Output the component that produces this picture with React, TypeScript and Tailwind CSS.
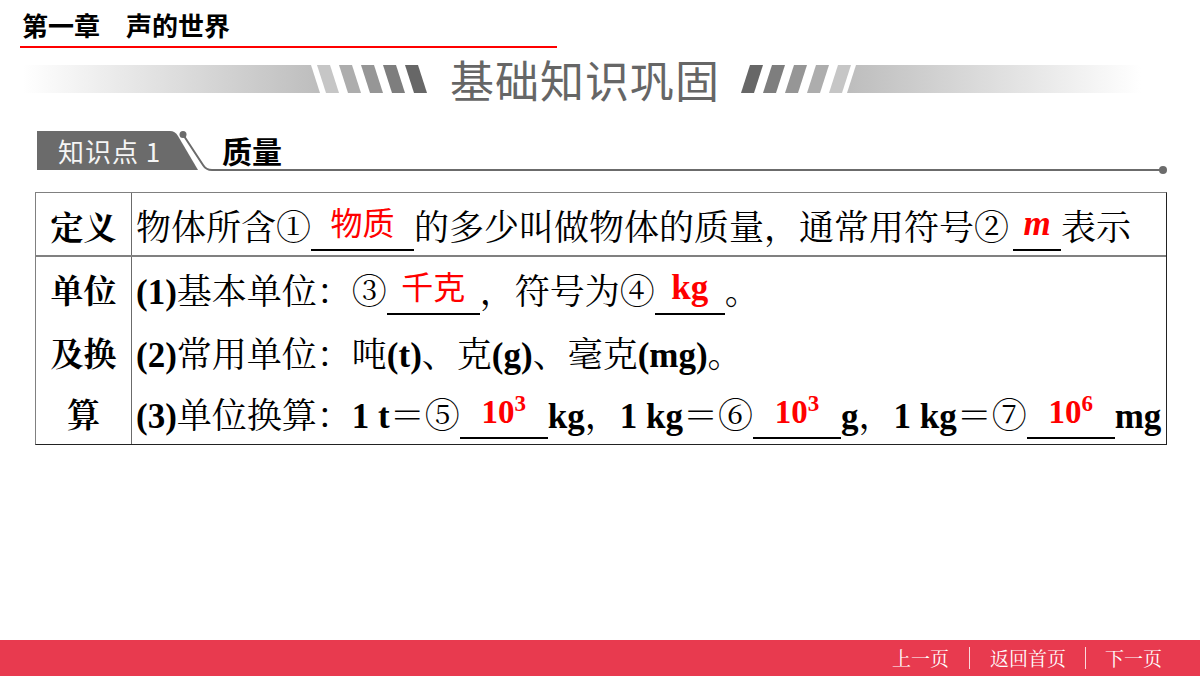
import type { ReactNode } from "react";

const serif = { fontFamily: '"Liberation Serif","Noto Serif CJK SC","Noto Sans CJK SC",serif' };

const leftStripes = ["#c6c6c6", "#adadad", "#969696", "#7e7e7e", "#676767"];

const Blank = ({ className, children }: { className: string; children?: ReactNode }) => (
  <span className={`inline-block border-b-2 border-black text-center leading-[1] pb-[3px] ${className}`}>
    <span className="relative -top-[5px]">{children}</span>
  </span>
);

const Cn = ({ children }: { children: ReactNode }) => (
  <span className="text-[32px] text-[#ff0000] font-normal [font-family:'Noto_Sans_CJK_SC',sans-serif]">{children}</span>
);

const Pow = ({ exp }: { exp: string }) => (
  <span className="font-bold text-[#ff0000] text-[33px]">
    10<span className="text-[23px] align-[12px]">{exp}</span>
  </span>
);

const Banner = () => (
  <div className="mt-[9px] h-[44px] flex items-center pl-[23px]">
    <svg width="405" height="28" viewBox="0 0 405 28">
      <defs>
        <linearGradient id="gl" x1="0" x2="1" y1="0" y2="0">
          <stop offset="0" stopColor="#ffffff" />
          <stop offset="1" stopColor="#bdbdbd" />
        </linearGradient>
      </defs>
      <polygon points="0,0 288,0 297,28 0,28" fill="url(#gl)" />
      {leftStripes.map((c, i) => {
        const x = 294 + i * 22;
        return <polygon key={i} points={`${x},0 ${x + 13},0 ${x + 22},28 ${x + 9},28`} fill={c} />;
      })}
    </svg>
    <div className="ml-[22px] text-[44px] leading-[44px] tracking-[1px] text-[#666666] [font-family:'Noto_Sans_CJK_SC',sans-serif]">
      基础知识巩固
    </div>
    <svg className="ml-[21px]" width="400" height="28" viewBox="0 0 400 28">
      <defs>
        <linearGradient id="gr" x1="0" x2="1" y1="0" y2="0">
          <stop offset="0" stopColor="#bdbdbd" />
          <stop offset="1" stopColor="#ffffff" />
        </linearGradient>
      </defs>
      {[...leftStripes].reverse().map((c, i) => {
        const x = i * 22;
        return <polygon key={i} points={`${x + 9},0 ${x + 22},0 ${x + 13},28 ${x},28`} fill={c} />;
      })}
      <polygon points="115,0 400,0 400,28 106,28" fill="url(#gr)" />
    </svg>
  </div>
);

const SectionTitle = () => (
  <div className="mt-[30px] ml-[37px] w-[1126px] h-[40px] flex [font-family:'Noto_Sans_CJK_SC',sans-serif]">
    <div className="w-[130px] h-[39px] bg-[#6b6b6b] pl-[21px] flex items-center text-[26px] tracking-[1px] text-[#f5f5f5]">
      知识点 1
    </div>
    <svg width="50" height="40" viewBox="0 0 50 40">
      <path d="M0 0 H3 Q8 0 11 5 L31 39 H0 Z" fill="#6b6b6b" />
      <circle cx="16" cy="3.5" r="3.5" fill="#6b6b6b" />
      <path d="M16 3.5 L36 34 Q39 39 45 39 H50" stroke="#6b6b6b" strokeWidth="2" fill="none" />
    </svg>
    <div className="relative flex-1 border-b-2 border-[#6b6b6b] flex items-center pl-[5px]">
      <span className="text-[30px] font-bold text-black leading-[34px]">质量</span>
      <span className="absolute -right-[4px] -bottom-[5px] w-[8px] h-[8px] rounded-full bg-[#6b6b6b]" />
    </div>
  </div>
);

const Table = () => (
  <div
    className="mt-[21px] ml-[35px] w-[1132px] border-t border-l border-[#808080] border-r border-r-[#222] border-b border-b-[#222] text-[35px] text-black"
    style={serif}
  >
    <div className="grid grid-cols-[96px_1fr] grid-rows-[62px] border-b-2 border-[#808080] h-[64px]">
      <div className="border-r-[1.5px] border-[#6b6b6b] text-center font-bold pt-[10px] leading-[52px] text-[33px]">定义</div>
      <div className="pl-[4px] pt-[10px] leading-[52px] whitespace-nowrap">
        物体所含①<Blank className="w-[103px]"><Cn>物质</Cn></Blank>的多少叫做物体的质量，通常用符号②<Blank className="w-[48px] ml-[4px]"><span className="font-bold italic text-[#ff0000]">m</span></Blank>表示
      </div>
    </div>
    <div className="grid grid-cols-[96px_1fr] grid-rows-[187px] h-[187px]">
      <div className="border-r-[1.5px] border-[#6b6b6b] text-center font-bold pt-[4px] text-[33px]">
        <div className="leading-[63px]">单位</div>
        <div className="leading-[63px]">及换</div>
        <div className="leading-[59px]">算</div>
      </div>
      <div className="pl-[4px] pt-[4px] whitespace-nowrap">
        <div className="leading-[63px]">
          <b>(1)</b>基本单位：③<Blank className="w-[93px]"><Cn>千克</Cn></Blank>，符号为④<Blank className="w-[70px]"><span className="font-bold text-[#ff0000]">kg</span></Blank>。
        </div>
        <div className="leading-[63px]">
          <b>(2)</b>常用单位：吨<b>(t)</b>、克<b>(g)</b>、毫克<b>(mg)</b>。
        </div>
        <div className="leading-[59px]">
          <b>(3)</b>单位换算：<b>1 t</b>＝⑤<Blank className="w-[88px]"><Pow exp="3" /></Blank><b>kg</b>，<b>1 kg</b>＝⑥<Blank className="w-[88px]"><Pow exp="3" /></Blank><b>g</b>，<b>1 kg</b>＝⑦<Blank className="w-[88px]"><Pow exp="6" /></Blank><b>mg</b>
        </div>
      </div>
    </div>
  </div>
);

const Footer = () => (
  <div
    className="h-[36px] bg-[#e83a4f] flex items-center justify-end pr-[38px] text-white text-[19px]"
    style={{ fontFamily: '"Noto Serif CJK SC","Noto Sans CJK SC",serif' }}
  >
    <span>上一页</span>
    <span className="mx-[20px] w-px h-[22px] bg-white/80" />
    <span>返回首页</span>
    <span className="mx-[19px] w-px h-[22px] bg-white/80" />
    <span>下一页</span>
  </div>
);

export default function App() {
  return (
    <div className="w-[1200px] h-[676px] flex flex-col bg-white overflow-hidden">
      <div className="h-[46px] pl-[22px] pt-[8px] text-[26px] font-bold leading-[34px] text-black [font-family:'Noto_Sans_CJK_SC',sans-serif]">
        第一章　声的世界
      </div>
      <div className="ml-[20px] w-[537px] h-[2px] bg-[#ff0000]" />
      <Banner />
      <SectionTitle />
      <Table />
      <div className="flex-1" />
      <Footer />
    </div>
  );
}
